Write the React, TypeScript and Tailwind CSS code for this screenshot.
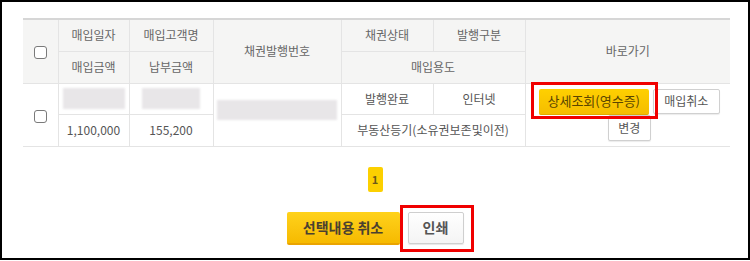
import React from "react";

const font = { fontFamily: '"Noto Sans CJK KR", "Noto Sans", sans-serif' };

function Check() {
  return <span className="inline-block size-[13px] rounded-[3px] border-[1.5px] border-[#7a7a7a] bg-white align-middle" />;
}

function Blur({ w, h, className = "" }: { w: string; h: string; className?: string }) {
  return <div className={`${w} ${h} ${className} mx-auto bg-[#e8e6e8] blur-[1px]`} />;
}

const th = "border border-[#e4e4e4] bg-[#f5f5f4] text-[12px] font-normal text-[#666] text-center p-0";
const td = "border border-[#e4e4e4] bg-white text-[12px] text-[#555] text-center p-0";

export default function App() {
  return (
    <div style={font} className="w-[750px] h-[260px] border-2 border-black bg-white relative">
      <div className="pl-[21px] pt-[16px]">
        <table className="table-fixed border-collapse w-[707px] border-t-2 border-t-[#d6d6d6] border-b border-b-[#d9d9d9]">
          <colgroup>
            <col className="w-[35px]" />
            <col className="w-[71px]" />
            <col className="w-[84px]" />
            <col className="w-[128px]" />
            <col className="w-[92px]" />
            <col className="w-[92px]" />
            <col className="w-[205px]" />
          </colgroup>
          <thead>
            <tr className="h-[32px]">
              <th rowSpan={2} className={`${th} border-l-0`}>
                <Check />
              </th>
              <th className={th}>매입일자</th>
              <th className={th}>매입고객명</th>
              <th rowSpan={2} className={th}>채권발행번호</th>
              <th className={th}>채권상태</th>
              <th className={th}>발행구분</th>
              <th rowSpan={2} className={`${th} border-r-0`}>바로가기</th>
            </tr>
            <tr className="h-[32px]">
              <th className={th}>매입금액</th>
              <th className={th}>납부금액</th>
              <th colSpan={2} className={th}>매입용도</th>
            </tr>
          </thead>
          <tbody>
            <tr className="h-[31px]">
              <td rowSpan={2} className={`${td} border-l-0`}>
                <Check />
              </td>
              <td className={td}>
                <Blur w="w-[62px]" h="h-[21px]" />
              </td>
              <td className={td}>
                <Blur w="w-[58px]" h="h-[21px]" />
              </td>
              <td rowSpan={2} className={td}>
                <Blur w="w-[120px]" h="h-[20px]" className="mb-[10px]" />
              </td>
              <td className={td}>발행완료</td>
              <td className={td}>인터넷</td>
              <td rowSpan={2} className={`${td} border-r-0`}>
                <div className="flex flex-col items-center pl-[3px]">
                  <div className="flex gap-[4px] items-start">
                    <div className="relative">
                      <button className="h-[26px] w-[110px] rounded-[2px] bg-gradient-to-b from-[#ffd000] to-[#f5bd00] border-b border-[#e0a800] text-[13px] text-[#5a4500]">
                        상세조회(영수증)
                      </button>
                      <div className="absolute -left-[8px] -right-[9px] -top-[7px] -bottom-[4px] border-[3px] border-[#f00000]" />
                    </div>
                    <button className="h-[25px] w-[67px] rounded-[2px] bg-white border border-[#d0d0d0] shadow-[0_1px_1px_rgba(0,0,0,0.08)] text-[12px] text-[#555]">
                      매입취소
                    </button>
                  </div>
                  <button className="h-[26px] w-[43px] rounded-[2px] bg-white border border-[#d0d0d0] shadow-[0_1px_1px_rgba(0,0,0,0.08)] text-[12px] text-[#555]">
                    변경
                  </button>
                </div>
              </td>
            </tr>
            <tr className="h-[32px]">
              <td className={td}>1,100,000</td>
              <td className={td}>155,200</td>
              <td colSpan={2} className={td}>부동산등기(소유권보존및이전)</td>
            </tr>
          </tbody>
        </table>
      </div>

      <div className="flex justify-center mt-[20px]">
        <span className="w-[15px] h-[25px] rounded-[2px] bg-[#fcd000] flex items-center justify-center text-[11px] font-bold text-[#6b5a1a]">
          1
        </span>
      </div>

      <div className="flex justify-center gap-[8px] mt-[20px]">
        <button className="h-[33px] w-[113px] rounded-[2px] bg-gradient-to-b from-[#ffd21a] to-[#f6ba00] border-b-2 border-[#eaa400] text-[14px] font-bold text-[#4a4030]">
          선택내용 취소
        </button>
        <div className="relative">
          <button className="h-[32px] w-[56px] rounded-[2px] bg-gradient-to-b from-white to-[#f4f4f4] border border-[#cfcfcf] shadow-[0_1px_1px_rgba(0,0,0,0.1)] text-[14px] font-bold text-[#555]">
            인쇄
          </button>
          <div className="absolute -left-[8px] -right-[10px] -top-[7px] -bottom-[7px] border-[3px] border-[#f00000]" />
        </div>
      </div>
    </div>
  );
}
